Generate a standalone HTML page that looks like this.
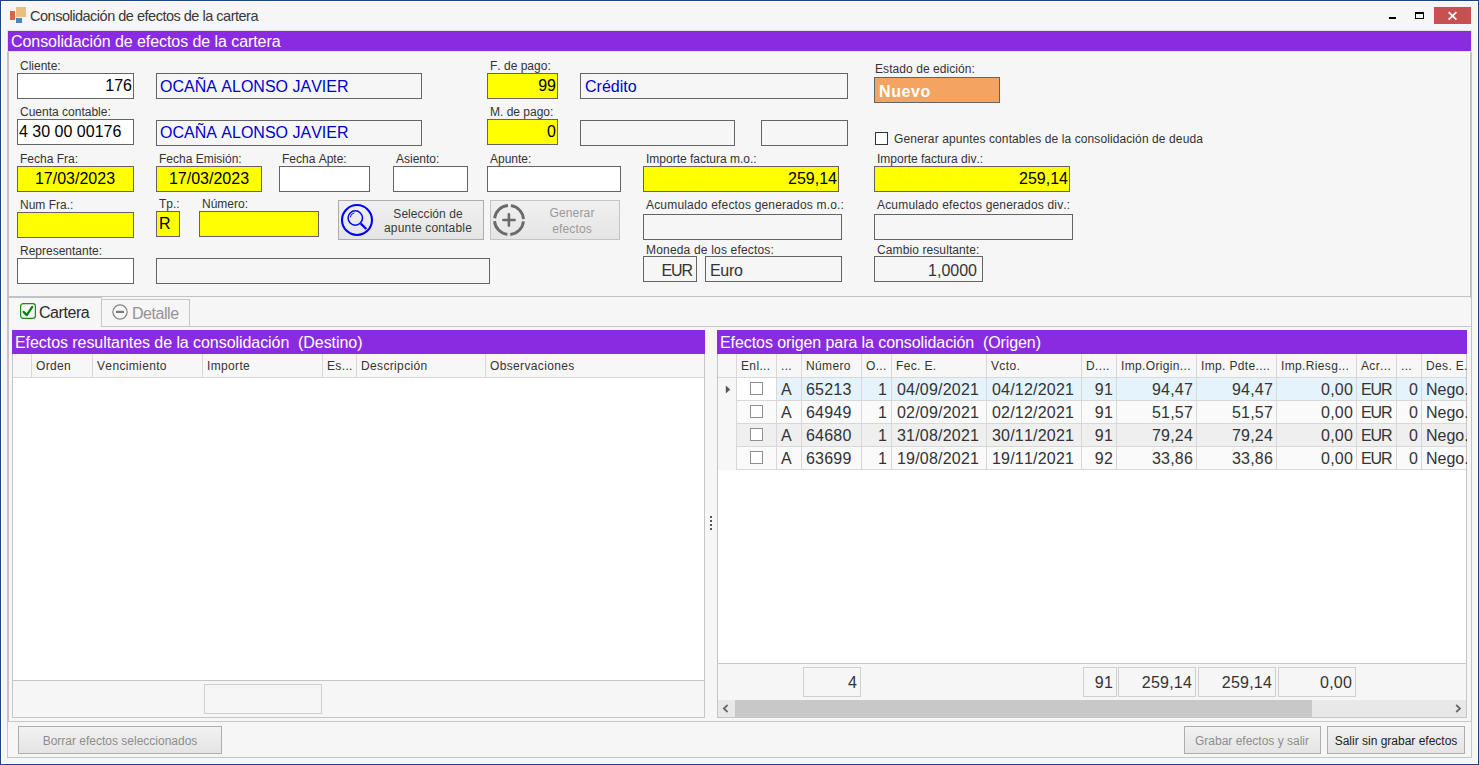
<!DOCTYPE html>
<html><head><meta charset="utf-8"><style>
html,body{margin:0;padding:0;}
body{width:1479px;height:765px;overflow:hidden;position:relative;background:#f6f6f6;font-family:"Liberation Sans",sans-serif;}
.b{position:absolute;box-sizing:border-box;border:1px solid #646464;}
.r{position:absolute;}
.t{position:absolute;white-space:pre;font-kerning:none;}
svg.r{display:block;}
</style></head><body>
<div class="r" style="left:0px;top:0px;width:1479px;height:765px;background:#1a4486;"></div>
<div class="r" style="left:1px;top:1px;width:1477px;height:763px;background:#ffffff;"></div>
<div class="r" style="left:2px;top:2px;width:1475px;height:761px;background:#f6f6f6;"></div>
<div class="r" style="left:10px;top:11px;width:5px;height:9px;background:#dc6440;"></div>
<div class="r" style="left:16px;top:7px;width:10px;height:10px;background:#e8c07c;"></div>
<div class="r" style="left:16px;top:18px;width:6px;height:5px;background:#4a84c4;"></div>
<div class="t" style="left:30px;top:9.00px;font-size:14.5px;line-height:14.5px;color:#383838;letter-spacing:-0.49px;font-weight:400;">Consolidación de efectos de la cartera</div>
<div class="r" style="left:1389px;top:17px;width:7px;height:2px;background:#000;"></div>
<div class="b" style="left:1415px;top:12px;width:9px;height:7px;border:1px solid #000;border-top-width:2px;background:transparent"></div>
<div class="r" style="left:1434px;top:7px;width:37px;height:17px;background:#c75050;"></div>
<svg class="r" style="left:1447px;top:11px" width="11" height="10" viewBox="0 0 11 10"><path d="M1.6 1.2 L9.4 8.6 M9.4 1.2 L1.6 8.6" stroke="#fff" stroke-width="1.7"/></svg>
<div class="r" style="left:7px;top:30px;width:1465px;height:22px;background:#dfe4d8;"></div>
<div class="r" style="left:8px;top:31px;width:1463px;height:20px;background:#8a2be2;"></div>
<div class="t" style="left:11px;top:34.00px;font-size:16px;line-height:16px;color:#fff;letter-spacing:-0.07px;font-weight:400;">Consolidación de efectos de la cartera</div>
<div class="r" style="left:7px;top:52px;width:2px;height:246px;background:#c3c3c3;"></div>
<div class="r" style="left:1470px;top:52px;width:2px;height:246px;background:#c3c3c3;"></div>
<div class="t" style="left:20px;top:60.00px;font-size:12px;line-height:12px;color:#333;letter-spacing:0px;font-weight:400;">Cliente:</div>
<div class="b" style="left:17px;top:73px;width:117px;height:26px;background:#fff;border-color:#646464;"></div>
<div class="t" style="left:-868px;width:1000px;text-align:right;top:78.00px;font-size:16px;line-height:16px;color:#000;letter-spacing:0px;font-weight:400;">176</div>
<div class="b" style="left:156px;top:73px;width:266px;height:26px;background:#f6f6f6;border-color:#646464;"></div>
<div class="t" style="left:160px;top:79.00px;font-size:16px;line-height:16px;color:#0000cd;letter-spacing:0px;font-weight:400;">OCAÑA ALONSO JAVIER</div>
<div class="t" style="left:490px;top:60.00px;font-size:12px;line-height:12px;color:#333;letter-spacing:0px;font-weight:400;">F. de pago:</div>
<div class="b" style="left:487px;top:73px;width:71px;height:26px;background:#ffff00;border-color:#646464;"></div>
<div class="t" style="left:-444px;width:1000px;text-align:right;top:78.00px;font-size:16px;line-height:16px;color:#000;letter-spacing:0px;font-weight:400;">99</div>
<div class="b" style="left:580px;top:73px;width:268px;height:26px;background:#f6f6f6;border-color:#646464;"></div>
<div class="t" style="left:585px;top:79.00px;font-size:16px;line-height:16px;color:#0000cd;letter-spacing:0.0px;font-weight:400;">Crédito</div>
<div class="t" style="left:875px;top:63.00px;font-size:12px;line-height:12px;color:#333;letter-spacing:0.07px;font-weight:400;">Estado de edición:</div>
<div class="b" style="left:874px;top:77px;width:126px;height:26px;background:#f4a460;border-color:#646464;"></div>
<div class="t" style="left:879px;top:84.00px;font-size:16px;line-height:16px;color:#fff;letter-spacing:0.6px;font-weight:700;">Nuevo</div>
<div class="t" style="left:20px;top:106.00px;font-size:12px;line-height:12px;color:#333;letter-spacing:0px;font-weight:400;">Cuenta contable:</div>
<div class="b" style="left:17px;top:119px;width:117px;height:26px;background:#fff;border-color:#646464;"></div>
<div class="t" style="left:19px;top:124.00px;font-size:16px;line-height:16px;color:#000;letter-spacing:0.0px;font-weight:400;">4 30 00 00176</div>
<div class="b" style="left:156px;top:120px;width:266px;height:26px;background:#f6f6f6;border-color:#646464;"></div>
<div class="t" style="left:160px;top:125.00px;font-size:16px;line-height:16px;color:#0000cd;letter-spacing:0px;font-weight:400;">OCAÑA ALONSO JAVIER</div>
<div class="t" style="left:490px;top:106.00px;font-size:12px;line-height:12px;color:#333;letter-spacing:0px;font-weight:400;">M. de pago:</div>
<div class="b" style="left:487px;top:119px;width:71px;height:26px;background:#ffff00;border-color:#646464;"></div>
<div class="t" style="left:-444px;width:1000px;text-align:right;top:124.00px;font-size:16px;line-height:16px;color:#000;letter-spacing:0px;font-weight:400;">0</div>
<div class="b" style="left:580px;top:120px;width:155px;height:26px;background:#f6f6f6;border-color:#646464;"></div>
<div class="b" style="left:761px;top:120px;width:87px;height:26px;background:#f6f6f6;border-color:#646464;"></div>
<div class="b" style="left:875px;top:132px;width:13px;height:13px;background:#fff;border-color:#333;"></div>
<div class="t" style="left:894px;top:133.00px;font-size:12px;line-height:12px;color:#333;letter-spacing:0.1px;font-weight:400;">Generar apuntes contables de la consolidación de deuda</div>
<div class="t" style="left:20px;top:153.00px;font-size:12px;line-height:12px;color:#333;letter-spacing:0px;font-weight:400;">Fecha Fra:</div>
<div class="b" style="left:17px;top:166px;width:117px;height:26px;background:#ffff00;border-color:#646464;"></div>
<div class="t" style="left:-425px;width:1000px;text-align:center;top:171.00px;font-size:16px;line-height:16px;color:#000;letter-spacing:0.0px;font-weight:400;">17/03/2023</div>
<div class="t" style="left:159px;top:153.00px;font-size:12px;line-height:12px;color:#333;letter-spacing:0px;font-weight:400;">Fecha Emisión:</div>
<div class="b" style="left:156px;top:166px;width:106px;height:26px;background:#ffff00;border-color:#646464;"></div>
<div class="t" style="left:-291px;width:1000px;text-align:center;top:171.00px;font-size:16px;line-height:16px;color:#000;letter-spacing:0.0px;font-weight:400;">17/03/2023</div>
<div class="t" style="left:282px;top:153.00px;font-size:12px;line-height:12px;color:#333;letter-spacing:0px;font-weight:400;">Fecha Apte:</div>
<div class="b" style="left:279px;top:166px;width:91px;height:26px;background:#fff;border-color:#646464;"></div>
<div class="t" style="left:396px;top:153.00px;font-size:12px;line-height:12px;color:#333;letter-spacing:0px;font-weight:400;">Asiento:</div>
<div class="b" style="left:393px;top:166px;width:75px;height:26px;background:#fff;border-color:#646464;"></div>
<div class="t" style="left:490px;top:153.00px;font-size:12px;line-height:12px;color:#333;letter-spacing:0px;font-weight:400;">Apunte:</div>
<div class="b" style="left:487px;top:166px;width:134px;height:26px;background:#fff;border-color:#646464;"></div>
<div class="t" style="left:646px;top:153.00px;font-size:12px;line-height:12px;color:#333;letter-spacing:0px;font-weight:400;">Importe factura m.o.:</div>
<div class="b" style="left:643px;top:166px;width:196px;height:26px;background:#ffff00;border-color:#646464;"></div>
<div class="t" style="left:-163px;width:1000px;text-align:right;top:171.00px;font-size:16px;line-height:16px;color:#000;letter-spacing:0.0px;font-weight:400;">259,14</div>
<div class="t" style="left:877px;top:153.00px;font-size:12px;line-height:12px;color:#333;letter-spacing:0px;font-weight:400;">Importe factura div.:</div>
<div class="b" style="left:874px;top:166px;width:196px;height:26px;background:#ffff00;border-color:#646464;"></div>
<div class="t" style="left:68px;width:1000px;text-align:right;top:171.00px;font-size:16px;line-height:16px;color:#000;letter-spacing:0.0px;font-weight:400;">259,14</div>
<div class="t" style="left:20px;top:199.00px;font-size:12px;line-height:12px;color:#333;letter-spacing:0px;font-weight:400;">Num Fra.:</div>
<div class="b" style="left:17px;top:212px;width:117px;height:26px;background:#ffff00;border-color:#646464;"></div>
<div class="t" style="left:159px;top:198.00px;font-size:12px;line-height:12px;color:#333;letter-spacing:0px;font-weight:400;">Tp.:</div>
<div class="b" style="left:156px;top:211px;width:24px;height:26px;background:#ffff00;border-color:#646464;"></div>
<div class="t" style="left:159px;top:216.00px;font-size:16px;line-height:16px;color:#000;letter-spacing:0.0px;font-weight:400;">R</div>
<div class="t" style="left:202px;top:198.00px;font-size:12px;line-height:12px;color:#333;letter-spacing:0px;font-weight:400;">Número:</div>
<div class="b" style="left:199px;top:211px;width:120px;height:26px;background:#ffff00;border-color:#646464;"></div>
<div class="b" style="left:338px;top:200px;width:146px;height:40px;background:linear-gradient(#f0f0f0,#e5e5e5);border-color:#adadad;"></div>
<svg class="r" style="left:338px;top:201px" width="38" height="38" viewBox="0 0 38 38"><circle cx="19" cy="19" r="15" fill="none" stroke="#0000ff" stroke-width="2.1"/><circle cx="17.3" cy="17" r="7.2" fill="none" stroke="#0000ff" stroke-width="1.5"/><path d="M22.8 22.6 L28.3 28" stroke="#0000ff" stroke-width="2.4"/><path d="M12.2 16.3 A5.2 5.2 0 0 1 16.4 11.9" fill="none" stroke="#0000ff" stroke-width="1"/></svg>
<div class="t" style="left:-72px;width:1000px;text-align:center;top:208.00px;font-size:12px;line-height:12px;color:#3a3a3a;letter-spacing:0.05px;font-weight:400;">Selección de</div>
<div class="t" style="left:-72px;width:1000px;text-align:center;top:222.00px;font-size:12px;line-height:12px;color:#3a3a3a;letter-spacing:0.17px;font-weight:400;">apunte contable</div>
<div class="b" style="left:490px;top:200px;width:130px;height:40px;background:linear-gradient(#f0f0f0,#e5e5e5);border-color:#c4c4c4;"></div>
<svg class="r" style="left:490px;top:201px" width="38" height="38" viewBox="0 0 38 38"><circle cx="19" cy="19" r="14.5" fill="none" stroke="#6a6a6a" stroke-width="2.9" stroke-dasharray="19.78 3" stroke-dashoffset="21.28"/><path d="M18.9 13.3 V24.6 M13.3 19 H24.6" stroke="#6a6a6a" stroke-width="2.6" stroke-linecap="round"/></svg>
<div class="t" style="left:72px;width:1000px;text-align:center;top:207.00px;font-size:12px;line-height:12px;color:#9a9a9a;letter-spacing:0.15px;font-weight:400;">Generar</div>
<div class="t" style="left:72px;width:1000px;text-align:center;top:223.00px;font-size:12px;line-height:12px;color:#9a9a9a;letter-spacing:0.15px;font-weight:400;">efectos</div>
<div class="t" style="left:646px;top:199.00px;font-size:12px;line-height:12px;color:#333;letter-spacing:0.18px;font-weight:400;">Acumulado efectos generados m.o.:</div>
<div class="b" style="left:643px;top:214px;width:199px;height:26px;background:#f6f6f6;border-color:#646464;"></div>
<div class="t" style="left:877px;top:199.00px;font-size:12px;line-height:12px;color:#333;letter-spacing:0.18px;font-weight:400;">Acumulado efectos generados div.:</div>
<div class="b" style="left:874px;top:214px;width:199px;height:26px;background:#f6f6f6;border-color:#646464;"></div>
<div class="t" style="left:20px;top:245.00px;font-size:12px;line-height:12px;color:#333;letter-spacing:0px;font-weight:400;">Representante:</div>
<div class="b" style="left:17px;top:258px;width:117px;height:26px;background:#fff;border-color:#646464;"></div>
<div class="b" style="left:156px;top:258px;width:334px;height:26px;background:#f6f6f6;border-color:#646464;"></div>
<div class="t" style="left:646px;top:244.00px;font-size:12px;line-height:12px;color:#333;letter-spacing:0.18px;font-weight:400;">Moneda de los efectos:</div>
<div class="b" style="left:643px;top:256px;width:54px;height:26px;background:#f6f6f6;border-color:#646464;"></div>
<div class="t" style="left:-308px;width:1000px;text-align:right;top:263.00px;font-size:16px;line-height:16px;color:#333;letter-spacing:-1.1px;font-weight:400;">EUR</div>
<div class="b" style="left:705px;top:256px;width:137px;height:26px;background:#f6f6f6;border-color:#646464;"></div>
<div class="t" style="left:710px;top:263.00px;font-size:16px;line-height:16px;color:#333;letter-spacing:-0.3px;font-weight:400;">Euro</div>
<div class="t" style="left:877px;top:244.00px;font-size:12px;line-height:12px;color:#333;letter-spacing:0.1px;font-weight:400;">Cambio resultante:</div>
<div class="b" style="left:874px;top:256px;width:109px;height:26px;background:#f6f6f6;border-color:#646464;"></div>
<div class="t" style="left:-23px;width:1000px;text-align:right;top:263.00px;font-size:16px;line-height:16px;color:#333;letter-spacing:0px;font-weight:400;">1,0000</div>
<div class="r" style="left:7px;top:296px;width:1465px;height:1px;background:#c3c3c3;"></div>
<div class="r" style="left:7px;top:297px;width:95px;height:1px;background:#c3c3c3;"></div>
<div class="r" style="left:7px;top:297px;width:2px;height:425px;background:#c3c3c3;"></div>
<div class="r" style="left:1471px;top:297px;width:1px;height:425px;background:#c3c3c3;"></div>
<div class="r" style="left:7px;top:721px;width:1465px;height:1px;background:#c8c8c8;"></div>
<svg class="r" style="left:20px;top:303px" width="16" height="16" viewBox="0 0 16 16"><rect x="0.6" y="0.6" width="14.8" height="14.8" rx="2.6" fill="none" stroke="#1a8c1a" stroke-width="1.2"/><path d="M3.6 8.9 L6.8 12.1 L12.2 3.8" fill="none" stroke="#0a800a" stroke-width="2.2" stroke-linecap="round" stroke-linejoin="round"/></svg>
<div class="t" style="left:39px;top:305.00px;font-size:16px;line-height:16px;color:#2b2b2b;letter-spacing:-0.45px;font-weight:400;">Cartera</div>
<div class="r" style="left:101px;top:297px;width:1px;height:30px;background:#c8c8c8;"></div>
<div class="r" style="left:101px;top:299px;width:89px;height:1px;background:#c8c8c8;"></div>
<div class="r" style="left:189px;top:299px;width:1px;height:28px;background:#c8c8c8;"></div>
<div class="r" style="left:101px;top:326px;width:1371px;height:1px;background:#c8c8c8;"></div>
<svg class="r" style="left:112px;top:304px" width="16" height="16" viewBox="0 0 16 16"><circle cx="8" cy="8" r="7.1" fill="none" stroke="#8a8a8a" stroke-width="1.3"/><path d="M4 7.9 H12" stroke="#7a7a7a" stroke-width="2.2"/></svg>
<div class="t" style="left:132px;top:306.00px;font-size:16px;line-height:16px;color:#939393;letter-spacing:-0.45px;font-weight:400;">Detalle</div>
<div class="b" style="left:12px;top:330px;width:693px;height:388px;background:#fff;border-color:#c6c6c6;"></div>
<div class="r" style="left:12px;top:330px;width:693px;height:24px;background:#8a2be2;"></div>
<div class="t" style="left:15px;top:335.00px;font-size:16px;line-height:16px;color:#fff;letter-spacing:-0.06px;font-weight:400;">Efectos resultantes de la consolidación&nbsp; (Destino)</div>
<div class="r" style="left:13px;top:354px;width:691px;height:23px;background:#f7f7f7;"></div>
<div class="r" style="left:13px;top:377px;width:691px;height:1px;background:#d8d8d8;"></div>
<div class="r" style="left:31px;top:354px;width:1px;height:24px;background:#d8d8d8;"></div>
<div class="r" style="left:92px;top:354px;width:1px;height:24px;background:#d8d8d8;"></div>
<div class="r" style="left:202px;top:354px;width:1px;height:24px;background:#d8d8d8;"></div>
<div class="r" style="left:322px;top:354px;width:1px;height:24px;background:#d8d8d8;"></div>
<div class="r" style="left:356px;top:354px;width:1px;height:24px;background:#d8d8d8;"></div>
<div class="r" style="left:485px;top:354px;width:1px;height:24px;background:#d8d8d8;"></div>
<div class="t" style="left:36px;top:360.00px;font-size:12px;line-height:12px;color:#333;letter-spacing:0.35px;font-weight:400;">Orden</div>
<div class="t" style="left:97px;top:360.00px;font-size:12px;line-height:12px;color:#333;letter-spacing:0.35px;font-weight:400;">Vencimiento</div>
<div class="t" style="left:207px;top:360.00px;font-size:12px;line-height:12px;color:#333;letter-spacing:0.35px;font-weight:400;">Importe</div>
<div class="t" style="left:327px;top:360.00px;font-size:12px;line-height:12px;color:#333;letter-spacing:0.35px;font-weight:400;">Es...</div>
<div class="t" style="left:361px;top:360.00px;font-size:12px;line-height:12px;color:#333;letter-spacing:0.35px;font-weight:400;">Descripción</div>
<div class="t" style="left:490px;top:360.00px;font-size:12px;line-height:12px;color:#333;letter-spacing:0.35px;font-weight:400;">Observaciones</div>
<div class="r" style="left:13px;top:681px;width:691px;height:36px;background:#f6f6f6;"></div>
<div class="r" style="left:13px;top:680px;width:691px;height:1px;background:#c6c6c6;"></div>
<div class="b" style="left:204px;top:684px;width:118px;height:30px;background:#f6f6f6;border-color:#cfcfcf;"></div>
<div class="r" style="left:710px;top:516px;width:2px;height:2px;background:#555;"></div>
<div class="r" style="left:710px;top:520px;width:2px;height:2px;background:#555;"></div>
<div class="r" style="left:710px;top:524px;width:2px;height:2px;background:#555;"></div>
<div class="r" style="left:710px;top:528px;width:2px;height:2px;background:#555;"></div>
<div class="b" style="left:717px;top:330px;width:750px;height:388px;background:#fff;border-color:#c6c6c6;"></div>
<div class="r" style="left:717px;top:330px;width:750px;height:24px;background:#8a2be2;"></div>
<div class="t" style="left:720px;top:335.00px;font-size:16px;line-height:16px;color:#fff;letter-spacing:-0.08px;font-weight:400;">Efectos origen para la consolidación&nbsp; (Origen)</div>
<div class="r" style="left:718px;top:354px;width:748px;height:23px;background:#f7f7f7;"></div>
<div class="r" style="left:718px;top:377px;width:748px;height:1px;background:#d8d8d8;"></div>
<div class="r" style="left:736px;top:354px;width:1px;height:24px;background:#d8d8d8;"></div>
<div class="r" style="left:776px;top:354px;width:1px;height:24px;background:#d8d8d8;"></div>
<div class="r" style="left:801px;top:354px;width:1px;height:24px;background:#d8d8d8;"></div>
<div class="r" style="left:861px;top:354px;width:1px;height:24px;background:#d8d8d8;"></div>
<div class="r" style="left:891px;top:354px;width:1px;height:24px;background:#d8d8d8;"></div>
<div class="r" style="left:986px;top:354px;width:1px;height:24px;background:#d8d8d8;"></div>
<div class="r" style="left:1081px;top:354px;width:1px;height:24px;background:#d8d8d8;"></div>
<div class="r" style="left:1116px;top:354px;width:1px;height:24px;background:#d8d8d8;"></div>
<div class="r" style="left:1196px;top:354px;width:1px;height:24px;background:#d8d8d8;"></div>
<div class="r" style="left:1276px;top:354px;width:1px;height:24px;background:#d8d8d8;"></div>
<div class="r" style="left:1356px;top:354px;width:1px;height:24px;background:#d8d8d8;"></div>
<div class="r" style="left:1396px;top:354px;width:1px;height:24px;background:#d8d8d8;"></div>
<div class="r" style="left:1421px;top:354px;width:1px;height:24px;background:#d8d8d8;"></div>
<div class="t" style="left:741px;top:360.00px;font-size:12px;line-height:12px;color:#333;letter-spacing:0.35px;font-weight:400;">Enl...</div>
<div class="t" style="left:781px;top:360.00px;font-size:12px;line-height:12px;color:#333;letter-spacing:0.35px;font-weight:400;">...</div>
<div class="t" style="left:806px;top:360.00px;font-size:12px;line-height:12px;color:#333;letter-spacing:0.35px;font-weight:400;">Número</div>
<div class="t" style="left:866px;top:360.00px;font-size:12px;line-height:12px;color:#333;letter-spacing:0.35px;font-weight:400;">O...</div>
<div class="t" style="left:896px;top:360.00px;font-size:12px;line-height:12px;color:#333;letter-spacing:0.35px;font-weight:400;">Fec. E.</div>
<div class="t" style="left:991px;top:360.00px;font-size:12px;line-height:12px;color:#333;letter-spacing:0.35px;font-weight:400;">Vcto.</div>
<div class="t" style="left:1086px;top:360.00px;font-size:12px;line-height:12px;color:#333;letter-spacing:0.35px;font-weight:400;">D....</div>
<div class="t" style="left:1121px;top:360.00px;font-size:12px;line-height:12px;color:#333;letter-spacing:0.35px;font-weight:400;">Imp.Origin...</div>
<div class="t" style="left:1201px;top:360.00px;font-size:12px;line-height:12px;color:#333;letter-spacing:0.35px;font-weight:400;">Imp. Pdte....</div>
<div class="t" style="left:1281px;top:360.00px;font-size:12px;line-height:12px;color:#333;letter-spacing:0.35px;font-weight:400;">Imp.Riesg...</div>
<div class="t" style="left:1361px;top:360.00px;font-size:12px;line-height:12px;color:#333;letter-spacing:0.35px;font-weight:400;">Acr...</div>
<div class="t" style="left:1401px;top:360.00px;font-size:12px;line-height:12px;color:#333;letter-spacing:0.35px;font-weight:400;">...</div>
<div class="r" style="left:1422px;top:354px;width:45px;height:23px;overflow:hidden">
<div class="t" style="left:4px;top:6.00px;font-size:12px;line-height:12px;color:#333;letter-spacing:0.35px;font-weight:400;">Des. E.</div>
</div>
<div class="r" style="left:718px;top:378px;width:18px;height:92px;background:#f7f7f7;"></div>
<div class="r" style="left:737px;top:378px;width:729px;height:22px;background:#e5f3fd;"></div>
<div class="r" style="left:737px;top:378px;width:39px;height:22px;background:#ffffff;"></div>
<div class="r" style="left:737px;top:400px;width:729px;height:1px;background:#d8d8d8;"></div>
<div class="r" style="left:776px;top:378px;width:1px;height:23px;background:#d8d8d8;"></div>
<div class="r" style="left:801px;top:378px;width:1px;height:23px;background:#d8d8d8;"></div>
<div class="r" style="left:861px;top:378px;width:1px;height:23px;background:#d8d8d8;"></div>
<div class="r" style="left:891px;top:378px;width:1px;height:23px;background:#d8d8d8;"></div>
<div class="r" style="left:986px;top:378px;width:1px;height:23px;background:#d8d8d8;"></div>
<div class="r" style="left:1081px;top:378px;width:1px;height:23px;background:#d8d8d8;"></div>
<div class="r" style="left:1116px;top:378px;width:1px;height:23px;background:#d8d8d8;"></div>
<div class="r" style="left:1196px;top:378px;width:1px;height:23px;background:#d8d8d8;"></div>
<div class="r" style="left:1276px;top:378px;width:1px;height:23px;background:#d8d8d8;"></div>
<div class="r" style="left:1356px;top:378px;width:1px;height:23px;background:#d8d8d8;"></div>
<div class="r" style="left:1396px;top:378px;width:1px;height:23px;background:#d8d8d8;"></div>
<div class="r" style="left:1421px;top:378px;width:1px;height:23px;background:#d8d8d8;"></div>
<div class="b" style="left:750px;top:382px;width:13px;height:13px;background:#fff;border-color:#8f8f8f;"></div>
<div class="t" style="left:781px;top:382.00px;font-size:16px;line-height:16px;color:#333;letter-spacing:0px;font-weight:400;">A</div>
<div class="t" style="left:806px;top:382.00px;font-size:16px;line-height:16px;color:#333;letter-spacing:0.2px;font-weight:400;">65213</div>
<div class="t" style="left:-113px;width:1000px;text-align:right;top:382.00px;font-size:16px;line-height:16px;color:#333;letter-spacing:0px;font-weight:400;">1</div>
<div class="t" style="left:897px;top:382.00px;font-size:16px;line-height:16px;color:#333;letter-spacing:0.2px;font-weight:400;">04/09/2021</div>
<div class="t" style="left:992px;top:382.00px;font-size:16px;line-height:16px;color:#333;letter-spacing:0.2px;font-weight:400;">04/12/2021</div>
<div class="t" style="left:113px;width:1000px;text-align:right;top:382.00px;font-size:16px;line-height:16px;color:#333;letter-spacing:0.2px;font-weight:400;">91</div>
<div class="t" style="left:193px;width:1000px;text-align:right;top:382.00px;font-size:16px;line-height:16px;color:#333;letter-spacing:0.2px;font-weight:400;">94,47</div>
<div class="t" style="left:273px;width:1000px;text-align:right;top:382.00px;font-size:16px;line-height:16px;color:#333;letter-spacing:0.2px;font-weight:400;">94,47</div>
<div class="t" style="left:353px;width:1000px;text-align:right;top:382.00px;font-size:16px;line-height:16px;color:#333;letter-spacing:0.2px;font-weight:400;">0,00</div>
<div class="t" style="left:1361px;top:382.00px;font-size:16px;line-height:16px;color:#333;letter-spacing:-1.1px;font-weight:400;">EUR</div>
<div class="t" style="left:418px;width:1000px;text-align:right;top:382.00px;font-size:16px;line-height:16px;color:#333;letter-spacing:0px;font-weight:400;">0</div>
<div class="r" style="left:1422px;top:378px;width:45px;height:22px;overflow:hidden">
<div class="t" style="left:4px;top:4.00px;font-size:16px;line-height:16px;color:#333;letter-spacing:0px;font-weight:400;">Nego.</div>
</div>
<div class="r" style="left:737px;top:401px;width:729px;height:22px;background:#fafafa;"></div>
<div class="r" style="left:737px;top:423px;width:729px;height:1px;background:#d8d8d8;"></div>
<div class="r" style="left:776px;top:401px;width:1px;height:23px;background:#d8d8d8;"></div>
<div class="r" style="left:801px;top:401px;width:1px;height:23px;background:#d8d8d8;"></div>
<div class="r" style="left:861px;top:401px;width:1px;height:23px;background:#d8d8d8;"></div>
<div class="r" style="left:891px;top:401px;width:1px;height:23px;background:#d8d8d8;"></div>
<div class="r" style="left:986px;top:401px;width:1px;height:23px;background:#d8d8d8;"></div>
<div class="r" style="left:1081px;top:401px;width:1px;height:23px;background:#d8d8d8;"></div>
<div class="r" style="left:1116px;top:401px;width:1px;height:23px;background:#d8d8d8;"></div>
<div class="r" style="left:1196px;top:401px;width:1px;height:23px;background:#d8d8d8;"></div>
<div class="r" style="left:1276px;top:401px;width:1px;height:23px;background:#d8d8d8;"></div>
<div class="r" style="left:1356px;top:401px;width:1px;height:23px;background:#d8d8d8;"></div>
<div class="r" style="left:1396px;top:401px;width:1px;height:23px;background:#d8d8d8;"></div>
<div class="r" style="left:1421px;top:401px;width:1px;height:23px;background:#d8d8d8;"></div>
<div class="b" style="left:750px;top:405px;width:13px;height:13px;background:#fff;border-color:#8f8f8f;"></div>
<div class="t" style="left:781px;top:405.00px;font-size:16px;line-height:16px;color:#333;letter-spacing:0px;font-weight:400;">A</div>
<div class="t" style="left:806px;top:405.00px;font-size:16px;line-height:16px;color:#333;letter-spacing:0.2px;font-weight:400;">64949</div>
<div class="t" style="left:-113px;width:1000px;text-align:right;top:405.00px;font-size:16px;line-height:16px;color:#333;letter-spacing:0px;font-weight:400;">1</div>
<div class="t" style="left:897px;top:405.00px;font-size:16px;line-height:16px;color:#333;letter-spacing:0.2px;font-weight:400;">02/09/2021</div>
<div class="t" style="left:992px;top:405.00px;font-size:16px;line-height:16px;color:#333;letter-spacing:0.2px;font-weight:400;">02/12/2021</div>
<div class="t" style="left:113px;width:1000px;text-align:right;top:405.00px;font-size:16px;line-height:16px;color:#333;letter-spacing:0.2px;font-weight:400;">91</div>
<div class="t" style="left:193px;width:1000px;text-align:right;top:405.00px;font-size:16px;line-height:16px;color:#333;letter-spacing:0.2px;font-weight:400;">51,57</div>
<div class="t" style="left:273px;width:1000px;text-align:right;top:405.00px;font-size:16px;line-height:16px;color:#333;letter-spacing:0.2px;font-weight:400;">51,57</div>
<div class="t" style="left:353px;width:1000px;text-align:right;top:405.00px;font-size:16px;line-height:16px;color:#333;letter-spacing:0.2px;font-weight:400;">0,00</div>
<div class="t" style="left:1361px;top:405.00px;font-size:16px;line-height:16px;color:#333;letter-spacing:-1.1px;font-weight:400;">EUR</div>
<div class="t" style="left:418px;width:1000px;text-align:right;top:405.00px;font-size:16px;line-height:16px;color:#333;letter-spacing:0px;font-weight:400;">0</div>
<div class="r" style="left:1422px;top:401px;width:45px;height:22px;overflow:hidden">
<div class="t" style="left:4px;top:4.00px;font-size:16px;line-height:16px;color:#333;letter-spacing:0px;font-weight:400;">Nego.</div>
</div>
<div class="r" style="left:737px;top:424px;width:729px;height:22px;background:#efefef;"></div>
<div class="r" style="left:737px;top:446px;width:729px;height:1px;background:#d8d8d8;"></div>
<div class="r" style="left:776px;top:424px;width:1px;height:23px;background:#d8d8d8;"></div>
<div class="r" style="left:801px;top:424px;width:1px;height:23px;background:#d8d8d8;"></div>
<div class="r" style="left:861px;top:424px;width:1px;height:23px;background:#d8d8d8;"></div>
<div class="r" style="left:891px;top:424px;width:1px;height:23px;background:#d8d8d8;"></div>
<div class="r" style="left:986px;top:424px;width:1px;height:23px;background:#d8d8d8;"></div>
<div class="r" style="left:1081px;top:424px;width:1px;height:23px;background:#d8d8d8;"></div>
<div class="r" style="left:1116px;top:424px;width:1px;height:23px;background:#d8d8d8;"></div>
<div class="r" style="left:1196px;top:424px;width:1px;height:23px;background:#d8d8d8;"></div>
<div class="r" style="left:1276px;top:424px;width:1px;height:23px;background:#d8d8d8;"></div>
<div class="r" style="left:1356px;top:424px;width:1px;height:23px;background:#d8d8d8;"></div>
<div class="r" style="left:1396px;top:424px;width:1px;height:23px;background:#d8d8d8;"></div>
<div class="r" style="left:1421px;top:424px;width:1px;height:23px;background:#d8d8d8;"></div>
<div class="b" style="left:750px;top:428px;width:13px;height:13px;background:#fff;border-color:#8f8f8f;"></div>
<div class="t" style="left:781px;top:428.00px;font-size:16px;line-height:16px;color:#333;letter-spacing:0px;font-weight:400;">A</div>
<div class="t" style="left:806px;top:428.00px;font-size:16px;line-height:16px;color:#333;letter-spacing:0.2px;font-weight:400;">64680</div>
<div class="t" style="left:-113px;width:1000px;text-align:right;top:428.00px;font-size:16px;line-height:16px;color:#333;letter-spacing:0px;font-weight:400;">1</div>
<div class="t" style="left:897px;top:428.00px;font-size:16px;line-height:16px;color:#333;letter-spacing:0.2px;font-weight:400;">31/08/2021</div>
<div class="t" style="left:992px;top:428.00px;font-size:16px;line-height:16px;color:#333;letter-spacing:0.2px;font-weight:400;">30/11/2021</div>
<div class="t" style="left:113px;width:1000px;text-align:right;top:428.00px;font-size:16px;line-height:16px;color:#333;letter-spacing:0.2px;font-weight:400;">91</div>
<div class="t" style="left:193px;width:1000px;text-align:right;top:428.00px;font-size:16px;line-height:16px;color:#333;letter-spacing:0.2px;font-weight:400;">79,24</div>
<div class="t" style="left:273px;width:1000px;text-align:right;top:428.00px;font-size:16px;line-height:16px;color:#333;letter-spacing:0.2px;font-weight:400;">79,24</div>
<div class="t" style="left:353px;width:1000px;text-align:right;top:428.00px;font-size:16px;line-height:16px;color:#333;letter-spacing:0.2px;font-weight:400;">0,00</div>
<div class="t" style="left:1361px;top:428.00px;font-size:16px;line-height:16px;color:#333;letter-spacing:-1.1px;font-weight:400;">EUR</div>
<div class="t" style="left:418px;width:1000px;text-align:right;top:428.00px;font-size:16px;line-height:16px;color:#333;letter-spacing:0px;font-weight:400;">0</div>
<div class="r" style="left:1422px;top:424px;width:45px;height:22px;overflow:hidden">
<div class="t" style="left:4px;top:4.00px;font-size:16px;line-height:16px;color:#333;letter-spacing:0px;font-weight:400;">Nego.</div>
</div>
<div class="r" style="left:737px;top:447px;width:729px;height:22px;background:#fafafa;"></div>
<div class="r" style="left:737px;top:469px;width:729px;height:1px;background:#d8d8d8;"></div>
<div class="r" style="left:776px;top:447px;width:1px;height:23px;background:#d8d8d8;"></div>
<div class="r" style="left:801px;top:447px;width:1px;height:23px;background:#d8d8d8;"></div>
<div class="r" style="left:861px;top:447px;width:1px;height:23px;background:#d8d8d8;"></div>
<div class="r" style="left:891px;top:447px;width:1px;height:23px;background:#d8d8d8;"></div>
<div class="r" style="left:986px;top:447px;width:1px;height:23px;background:#d8d8d8;"></div>
<div class="r" style="left:1081px;top:447px;width:1px;height:23px;background:#d8d8d8;"></div>
<div class="r" style="left:1116px;top:447px;width:1px;height:23px;background:#d8d8d8;"></div>
<div class="r" style="left:1196px;top:447px;width:1px;height:23px;background:#d8d8d8;"></div>
<div class="r" style="left:1276px;top:447px;width:1px;height:23px;background:#d8d8d8;"></div>
<div class="r" style="left:1356px;top:447px;width:1px;height:23px;background:#d8d8d8;"></div>
<div class="r" style="left:1396px;top:447px;width:1px;height:23px;background:#d8d8d8;"></div>
<div class="r" style="left:1421px;top:447px;width:1px;height:23px;background:#d8d8d8;"></div>
<div class="b" style="left:750px;top:451px;width:13px;height:13px;background:#fff;border-color:#8f8f8f;"></div>
<div class="t" style="left:781px;top:451.00px;font-size:16px;line-height:16px;color:#333;letter-spacing:0px;font-weight:400;">A</div>
<div class="t" style="left:806px;top:451.00px;font-size:16px;line-height:16px;color:#333;letter-spacing:0.2px;font-weight:400;">63699</div>
<div class="t" style="left:-113px;width:1000px;text-align:right;top:451.00px;font-size:16px;line-height:16px;color:#333;letter-spacing:0px;font-weight:400;">1</div>
<div class="t" style="left:897px;top:451.00px;font-size:16px;line-height:16px;color:#333;letter-spacing:0.2px;font-weight:400;">19/08/2021</div>
<div class="t" style="left:992px;top:451.00px;font-size:16px;line-height:16px;color:#333;letter-spacing:0.2px;font-weight:400;">19/11/2021</div>
<div class="t" style="left:113px;width:1000px;text-align:right;top:451.00px;font-size:16px;line-height:16px;color:#333;letter-spacing:0.2px;font-weight:400;">92</div>
<div class="t" style="left:193px;width:1000px;text-align:right;top:451.00px;font-size:16px;line-height:16px;color:#333;letter-spacing:0.2px;font-weight:400;">33,86</div>
<div class="t" style="left:273px;width:1000px;text-align:right;top:451.00px;font-size:16px;line-height:16px;color:#333;letter-spacing:0.2px;font-weight:400;">33,86</div>
<div class="t" style="left:353px;width:1000px;text-align:right;top:451.00px;font-size:16px;line-height:16px;color:#333;letter-spacing:0.2px;font-weight:400;">0,00</div>
<div class="t" style="left:1361px;top:451.00px;font-size:16px;line-height:16px;color:#333;letter-spacing:-1.1px;font-weight:400;">EUR</div>
<div class="t" style="left:418px;width:1000px;text-align:right;top:451.00px;font-size:16px;line-height:16px;color:#333;letter-spacing:0px;font-weight:400;">0</div>
<div class="r" style="left:1422px;top:447px;width:45px;height:22px;overflow:hidden">
<div class="t" style="left:4px;top:4.00px;font-size:16px;line-height:16px;color:#333;letter-spacing:0px;font-weight:400;">Nego.</div>
</div>
<div class="r" style="left:736px;top:354px;width:1px;height:116px;background:#d8d8d8;"></div>
<svg class="r" style="left:725px;top:385px" width="6" height="9" viewBox="0 0 6 9"><path d="M0.8 0.5 L5.2 4.5 L0.8 8.5Z" fill="#555"/></svg>
<div class="r" style="left:718px;top:663px;width:748px;height:1px;background:#c6c6c6;"></div>
<div class="r" style="left:718px;top:664px;width:748px;height:36px;background:#f6f6f6;"></div>
<div class="b" style="left:803px;top:667px;width:58px;height:30px;background:#f6f6f6;border-color:#cfcfcf;"></div>
<div class="t" style="left:-143px;width:1000px;text-align:right;top:675.00px;font-size:16px;line-height:16px;color:#333;letter-spacing:0.2px;font-weight:400;">4</div>
<div class="b" style="left:1083px;top:667px;width:34px;height:30px;background:#f6f6f6;border-color:#cfcfcf;"></div>
<div class="t" style="left:113px;width:1000px;text-align:right;top:675.00px;font-size:16px;line-height:16px;color:#333;letter-spacing:0.2px;font-weight:400;">91</div>
<div class="b" style="left:1118px;top:667px;width:78px;height:30px;background:#f6f6f6;border-color:#cfcfcf;"></div>
<div class="t" style="left:192px;width:1000px;text-align:right;top:675.00px;font-size:16px;line-height:16px;color:#333;letter-spacing:0.2px;font-weight:400;">259,14</div>
<div class="b" style="left:1198px;top:667px;width:78px;height:30px;background:#f6f6f6;border-color:#cfcfcf;"></div>
<div class="t" style="left:272px;width:1000px;text-align:right;top:675.00px;font-size:16px;line-height:16px;color:#333;letter-spacing:0.2px;font-weight:400;">259,14</div>
<div class="b" style="left:1278px;top:667px;width:78px;height:30px;background:#f6f6f6;border-color:#cfcfcf;"></div>
<div class="t" style="left:352px;width:1000px;text-align:right;top:675.00px;font-size:16px;line-height:16px;color:#333;letter-spacing:0.2px;font-weight:400;">0,00</div>
<div class="r" style="left:718px;top:700px;width:748px;height:17px;background:#e8e8e8;"></div>
<div class="r" style="left:735px;top:700px;width:577px;height:17px;background:#c8c8c8;"></div>
<svg class="r" style="left:721px;top:704px" width="9" height="9" viewBox="0 0 9 9"><path d="M6.6 1 L2.8 4.5 L6.6 8" fill="none" stroke="#666" stroke-width="1.7"/></svg>
<svg class="r" style="left:1454px;top:704px" width="9" height="9" viewBox="0 0 9 9"><path d="M2.2 1 L6 4.5 L2.2 8" fill="none" stroke="#666" stroke-width="1.7"/></svg>
<div class="r" style="left:7px;top:722px;width:1px;height:36px;background:#c8c8c8;"></div>
<div class="r" style="left:1471px;top:722px;width:1px;height:36px;background:#c8c8c8;"></div>
<div class="r" style="left:7px;top:757px;width:1465px;height:1px;background:#c8c8c8;"></div>
<div class="b" style="left:18px;top:726px;width:204px;height:28px;background:linear-gradient(#f2f2f2,#e4e4e4);border-color:#adadad;"></div>
<div class="t" style="left:-380px;width:1000px;text-align:center;top:735.00px;font-size:12px;line-height:12px;color:#8d8d8d;letter-spacing:0px;font-weight:400;">Borrar efectos seleccionados</div>
<div class="b" style="left:1184px;top:726px;width:137px;height:28px;background:linear-gradient(#f2f2f2,#e4e4e4);border-color:#adadad;"></div>
<div class="t" style="left:752px;width:1000px;text-align:center;top:735.00px;font-size:12px;line-height:12px;color:#8d8d8d;letter-spacing:0px;font-weight:400;">Grabar efectos y salir</div>
<div class="b" style="left:1327px;top:726px;width:138px;height:28px;background:linear-gradient(#f2f2f2,#e4e4e4);border-color:#adadad;"></div>
<div class="t" style="left:896px;width:1000px;text-align:center;top:735.00px;font-size:12px;line-height:12px;color:#222;letter-spacing:0px;font-weight:400;">Salir sin grabar efectos</div>
</body></html>
